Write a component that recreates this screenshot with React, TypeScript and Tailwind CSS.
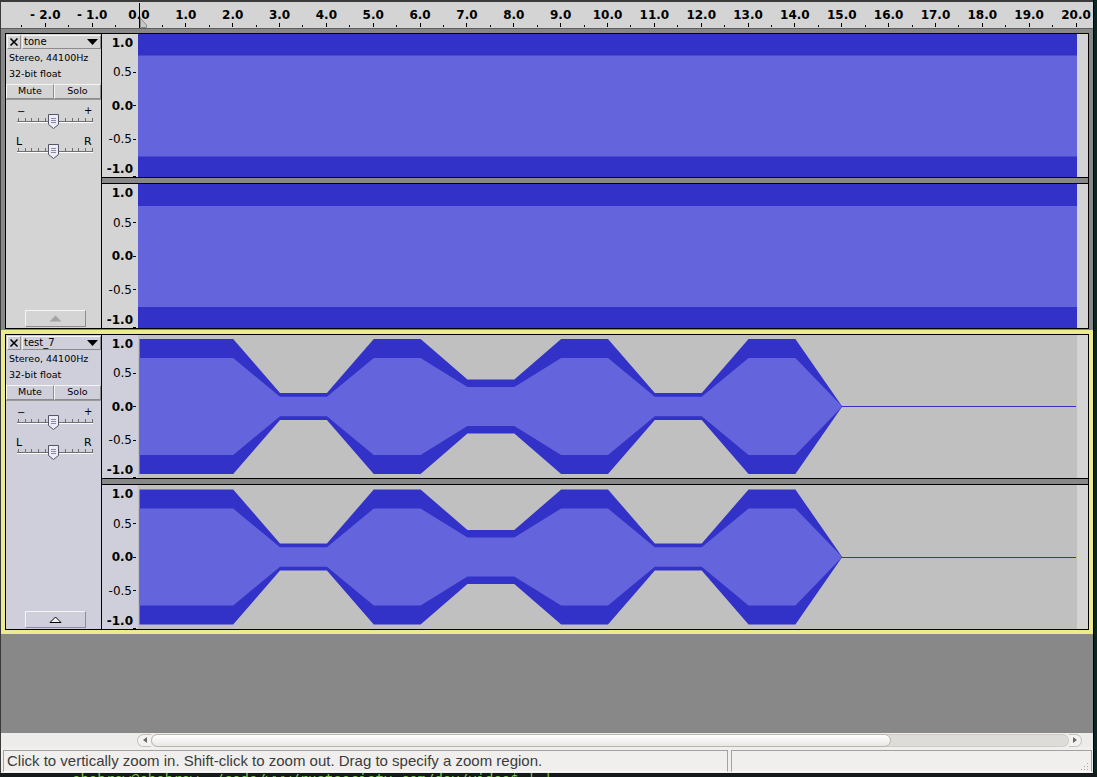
import React from 'react';

const PX_PER_SEC = 46.85;
// x of 0.0 s inside the window content (window content starts at x=1)
const ZERO_X = 137.5;

const DARK_BLUE = '#3232c8';
const LIGHT_BLUE = '#6464dc';

const ENVELOPE: [number, number][] = [
  [0, 1], [2, 1], [3, 0.2], [4, 0.2], [5, 1], [6, 1], [7, 0.4], [8, 0.4],
  [9, 1], [10, 1], [11, 0.2], [12, 0.2], [13, 1], [14, 1], [15, 0],
];

const fmt = (t: number) => (t < 0 ? `- ${Math.abs(t).toFixed(1)}` : t.toFixed(1));

function TimeRuler() {
  const majors: number[] = [];
  for (let t = -2; t <= 20; t++) majors.push(t);
  const minors: number[] = [];
  for (let t = -2.5; t <= 20.5; t += 1) minors.push(t);

  return (
    <div className="relative h-[29px] shrink-0 border-t-2 border-b border-t-[#3a3a3a] border-b-[#5e5e5e] bg-[#d4d4d4]">
      <svg className="absolute inset-0" width={1092} height={26}>
        {majors.map((t) => (
          <rect key={t} x={Math.round(ZERO_X + t * PX_PER_SEC)} y={21} width={1} height={4} fill="#000" />
        ))}
        {minors.map((t) => (
          <rect key={t} x={Math.round(ZERO_X + t * PX_PER_SEC)} y={23} width={1} height={2} fill="#000" />
        ))}
        <rect x={138} y={1} width={1} height={25} fill="#000" />
        <polygon points="139.5,16.5 145.5,23 145.5,25.5 139.5,25.5" fill="#c8c8c8" stroke="#8a8a8a" strokeWidth={1} />
      </svg>
      {majors.map((t) => (
        <span
          key={t}
          className="absolute top-[6px] -translate-x-1/2 whitespace-pre text-[12px] leading-[14px] font-bold text-black"
          style={{ left: ZERO_X + t * PX_PER_SEC + 0.5 }}
        >
          {fmt(t)}
        </span>
      ))}
    </div>
  );
}

function VRuler({ h, bg }: { h: number; bg: string }) {
  const c = h / 2;
  const marks = [
    { v: 1, text: '1.0', bold: true },
    { v: 0.5, text: '0.5', bold: false },
    { v: 0, text: '0.0', bold: true },
    { v: -0.5, text: '-0.5', bold: false },
    { v: -1, text: '-1.0', bold: true },
  ];
  return (
    <div className={`relative w-[36px] shrink-0 ${bg}`}>
      <svg className="absolute inset-0" width={36} height={h}>
        {marks
          .filter((m) => Math.abs(m.v) < 1)
          .map((m) => (
            <rect key={m.text} x={31} y={Math.floor(c - m.v * 67)} width={3} height={1} fill="#000" />
          ))}
        <rect x={31} y={h - 1} width={3} height={1} fill="#000" />
      </svg>
      {marks.map((m) => {
        const y = Math.min(Math.max(c - m.v * 67, 9), h - 8);
        return (
          <span
            key={m.text}
            className={`absolute text-[12px] leading-[14px] text-black ${m.bold ? 'right-[5px] font-bold' : 'right-[6px]'}`}
            style={{ top: y - 7 }}
          >
            {m.text}
          </span>
        );
      })}
    </div>
  );
}

function ToneWave({ h }: { h: number }) {
  const c = h / 2;
  return (
    <svg width={939} height={h} className="block shrink-0">
      <rect width={939} height={h} fill={DARK_BLUE} />
      <rect y={c - 50} width={939} height={101} fill={LIGHT_BLUE} />
    </svg>
  );
}

function envPoints(c: number, scale: number) {
  const top = ENVELOPE.map(([t, a]) => `${1.5 + t * PX_PER_SEC},${c - a * scale}`);
  const bottom = [...ENVELOPE].reverse().map(([t, a]) => `${1.5 + t * PX_PER_SEC},${c + a * scale}`);
  return [...top, ...bottom].join(' ');
}

function TestWave({ h }: { h: number }) {
  const c = h / 2;
  const endX = 1.5 + 15 * PX_PER_SEC;
  return (
    <svg width={939} height={h} className="block shrink-0">
      <rect width={939} height={h} fill="#c0c0c0" />
      <polygon points={envPoints(c, 67.5)} fill={DARK_BLUE} />
      <polygon points={envPoints(c, 48.5)} fill={LIGHT_BLUE} />
      <rect x={endX - 1} y={Math.floor(c)} width={939 - endX} height={1} fill={DARK_BLUE} />
    </svg>
  );
}

function Channel({ h, tone, rulerBg }: { h: number; tone: boolean; rulerBg: string }) {
  return (
    <div className={`flex ${h === 143 ? 'h-[143px]' : 'h-[144px]'}`}>
      <VRuler h={h} bg={rulerBg} />
      {tone ? <ToneWave h={h} /> : <TestWave h={h} />}
      <div className="flex-1 bg-[#d4d4d4]" />
    </div>
  );
}

function Slider({ pan }: { pan: boolean }) {
  const ticks: number[] = [];
  for (let i = 0; i < 12; i++) ticks.push(Math.round(12 + i * 6.7));
  return (
    <div className="relative h-[24px] w-[95px] shrink-0">
      <svg className="absolute inset-0" width={95} height={24}>
        <rect x={11} y={15} width={76} height={1} fill="#6e6e6e" />
        <rect x={11} y={16} width={76} height={1} fill="#ffffff" />
        {ticks.map((x) => (
          <rect key={x} x={x} y={12} width={1} height={3} fill="#6e6e6e" />
        ))}
        <polygon points="42.5,8.5 52.5,8.5 52.5,18.5 47.5,22.5 42.5,18.5" fill="#ececf4" stroke="#55556a" strokeWidth={1} />
        <rect x={45} y={12} width={5} height={1} fill="#8a8aa8" />
        <rect x={45} y={14} width={5} height={1} fill="#8a8aa8" />
        <rect x={45} y={16} width={5} height={1} fill="#8a8aa8" />
      </svg>
      {pan ? (
        <>
          <span className="absolute left-[10px] top-[-1px] text-[11px] leading-[13px] text-black">L</span>
          <span className="absolute left-[78px] top-[-1px] text-[11px] leading-[13px] text-black">R</span>
        </>
      ) : (
        <>
          <span className="absolute left-[11px] top-[0px] text-[10px] leading-[12px] text-black">−</span>
          <span className="absolute left-[78px] top-[-1px] text-[10px] leading-[12px] text-black">+</span>
        </>
      )}
    </div>
  );
}

const bevel = 'border border-t-[#f4f4f4] border-l-[#f4f4f4] border-r-[#8c8c8c] border-b-[#8c8c8c]';

function TrackHeader({ name, selected }: { name: string; selected: boolean }) {
  const bg = selected ? 'bg-[#cfcfdb]' : 'bg-[#d4d4d4]';
  return (
    <div className={`flex w-[96px] shrink-0 flex-col border-r border-black text-black ${bg}`}>
      <div className="flex h-[15px] shrink-0 gap-[1px] pl-[1px] pt-[1px]">
        <div className={`flex h-[14px] w-[14px] items-center justify-center ${bevel}`}>
          <svg width={10} height={10}>
            <path d="M1.5 1.5 L8.5 8.5 M8.5 1.5 L1.5 8.5" stroke="#000" strokeWidth={1.6} />
          </svg>
        </div>
        <div className={`flex h-[14px] flex-1 items-center justify-between pl-[1px] pr-[2px] ${bevel}`}>
          <span className="text-[10px] leading-[12px]">{name}</span>
          <svg width={11} height={6}>
            <polygon points="0,0 11,0 5.5,6" fill="#000" />
          </svg>
        </div>
      </div>
      <div className="pl-[3px] pt-[1px] text-[9.5px] leading-[16px]">
        <div>Stereo, 44100Hz</div>
        <div>32-bit float</div>
      </div>
      <div className="mt-[2px] flex h-[16px] shrink-0 border-b border-b-[#9a9a9a]">
        <div className={`flex w-[48px] items-center justify-center text-[9.5px] ${bevel}`}>Mute</div>
        <div className={`flex flex-1 items-center justify-center text-[9.5px] ${bevel}`}>Solo</div>
      </div>
      <div className="h-[6px] shrink-0" />
      <Slider pan={false} />
      <div className="h-[6px] shrink-0" />
      <Slider pan />
      <div className={`mb-[1px] ml-[19px] mt-auto flex h-[17px] w-[61px] items-center justify-center ${bevel}`}>
        <svg width={13} height={7}>
          {selected ? (
            <polygon points="1,6.5 6.5,1 12,6.5" fill="#f2f2f2" stroke="#000" strokeWidth={1} />
          ) : (
            <polygon points="0.5,6.5 6.5,0.5 12.5,6.5" fill="#a4a4a4" />
          )}
        </svg>
      </div>
    </div>
  );
}

function Track({ name, tone, selected }: { name: string; tone: boolean; selected: boolean }) {
  const rulerBg = selected ? 'bg-[#cfcfdb]' : 'bg-[#d4d4d4]';
  return (
    <div className="flex h-[296px] border border-black">
      <TrackHeader name={name} selected={selected} />
      <div className="flex flex-1 flex-col">
        <Channel h={143} tone={tone} rulerBg={rulerBg} />
        <div className="h-[7px] border-y border-black bg-[#888888]" />
        <Channel h={144} tone={tone} rulerBg={rulerBg} />
      </div>
    </div>
  );
}

function Scrollbar() {
  return (
    <div className="flex h-[14px] shrink-0 items-center bg-[#edeceb] pl-[136px]">
      <div className="flex h-[13px] w-[14px] items-center justify-center rounded-l-full border border-r-0 border-[#c4c1bc] bg-[#f3f2f0]">
        <svg width={4} height={6}>
          <polygon points="4,0 4,6 0,3" fill="#6a6a6a" />
        </svg>
      </div>
      <div className="flex h-[13px] w-[918px] rounded-full border border-[#cfccc7] bg-[#dedcd9]">
        <div className="-my-px -ml-px h-[13px] w-[740px] rounded-full border border-[#b9b6b1] bg-gradient-to-b from-white to-[#e9e7e4]" />
      </div>
      <div className="flex h-[13px] w-[13px] items-center justify-center rounded-r-full border border-l-0 border-[#c4c1bc] bg-[#f3f2f0]">
        <svg width={4} height={6}>
          <polygon points="0,0 0,6 4,3" fill="#6a6a6a" />
        </svg>
      </div>
    </div>
  );
}

function StatusBar() {
  return (
    <div className="flex h-[26px] shrink-0 gap-[3px] bg-[#f0efed] pb-[1px] pl-[2px] pr-[1px] pt-[3px]">
      <div className="flex w-[725px] items-center whitespace-nowrap border border-[#a2a2a2] border-b-[#fbfbfb] pl-[3px] font-['Liberation_Sans',sans-serif] text-[15px] text-[#3c3c3c]">
        Click to vertically zoom in. Shift-click to zoom out. Drag to specify a zoom region.
      </div>
      <div className="relative flex-1 border border-[#a2a2a2] border-b-[#fbfbfb]">
        <svg className="absolute bottom-[0px] right-[2px]" width={10} height={10}>
          {[[8, 0], [8, 3], [5, 3], [8, 6], [5, 6], [2, 6]].map(([x, y]) => (
            <rect key={`${x}-${y}`} x={x} y={y + 2} width={1} height={1} fill="#a9a9a9" />
          ))}
        </svg>
      </div>
    </div>
  );
}

export default function App() {
  return (
    <div className="flex h-[777px] w-[1097px] flex-col overflow-hidden bg-[#0b2424] font-['DejaVu_Sans',sans-serif]">
      <div className="flex h-[773px] shrink-0">
        <div className="flex h-full w-[1094px] shrink-0 flex-col border-l border-r border-l-[#3a3a3a] border-r-black bg-[#888888]">
          <TimeRuler />
          <div className="flex flex-1 flex-col bg-[#888888] pt-[4px]">
            <div className="ml-[4px] w-[1084px]">
              <Track name="tone" tone selected={false} />
            </div>
            <div className="mt-[1px] w-[1092px] border-4 border-[#ecec8c]">
              <Track name="test_7" tone={false} selected />
            </div>
          </div>
          <Scrollbar />
          <StatusBar />
        </div>
      </div>
      <div className="h-[4px] shrink-0 overflow-hidden bg-[#141a1a] pl-[72px]">
        <div className="-mt-[2px] whitespace-pre font-['DejaVu_Sans_Mono',monospace] text-[14px] leading-[16px] text-[#7fc94f]">
          ehobrew@ehobrew:~/code/www/rustsociety.com/dev/video$ | |
        </div>
      </div>
    </div>
  );
}
